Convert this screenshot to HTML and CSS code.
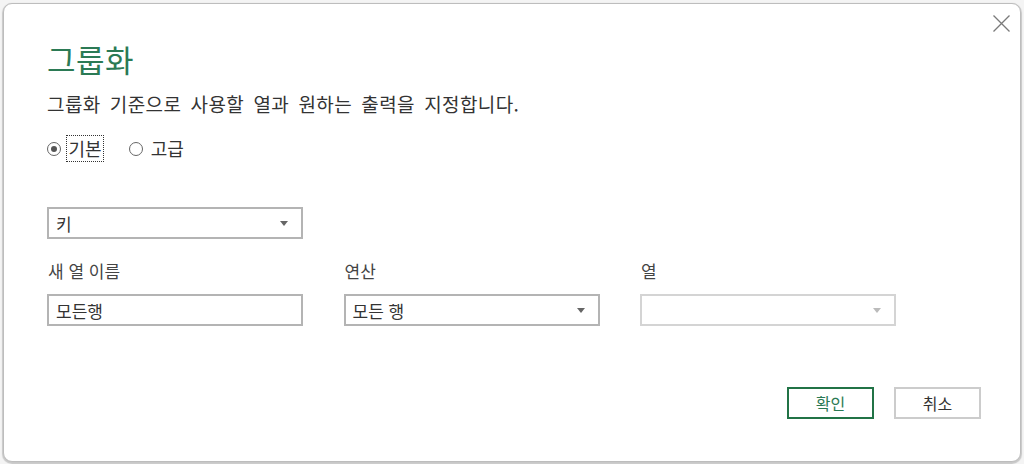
FILE: index.html
```html
<!DOCTYPE html>
<html lang="ko">
<head>
<meta charset="utf-8">
<link rel="stylesheet" href="styles.css">
</head>
<body>
<div class="dialog">
  <button class="close" aria-label="닫기">
    <svg width="17" height="17" viewBox="0 0 17 17"><path d="M0.5 0.5 L16.5 16.5 M16.5 0.5 L0.5 16.5" stroke="#7a7a7a" stroke-width="1.3" fill="none"/></svg>
  </button>
  <h1 class="title">그룹화</h1>
  <p class="subtitle">그룹화 기준으로 사용할 열과 원하는 출력을 지정합니다.</p>
  <div class="radios">
    <label class="radio"><span class="dot checked"></span><span class="rlabel focus">기본</span></label>
    <label class="radio"><span class="dot"></span><span class="rlabel">고급</span></label>
  </div>
  <div class="field select key">
    <span class="value">키</span>
    <span class="arrow"></span>
  </div>
  <div class="cols">
    <div class="col">
      <div class="label">새 열 이름</div>
      <div class="field"><span class="value">모든행</span></div>
    </div>
    <div class="col">
      <div class="label">연산</div>
      <div class="field select"><span class="value">모든 행</span><span class="arrow"></span></div>
    </div>
    <div class="col">
      <div class="label">열</div>
      <div class="field select disabled"><span class="value"></span><span class="arrow"></span></div>
    </div>
  </div>
  <div class="footer">
    <button class="btn primary">확인</button>
    <button class="btn">취소</button>
  </div>
</div>
</body>
</html>
```
FILE: styles.css
```css
html, body {
  margin: 0;
  padding: 0;
  background: #f4f4f4;
}
body {
  width: 1024px;
  height: 464px;
  overflow: hidden;
  font-family: "Noto Sans CJK KR", "Noto Sans", sans-serif;
  color: #333;
}
.dialog {
  position: relative;
  box-sizing: border-box;
  margin: 3px 0 0 3px;
  width: 1018px;
  height: 459px;
  background: #fff;
  border: 1px solid #bdbdbd;
  border-radius: 9px;
  box-shadow: 0 1px 1px 1px rgba(0,0,0,0.18);
  padding: 0 0 0 43px;
  display: flex;
  flex-direction: column;
  align-items: flex-start;
}
.close {
  position: absolute;
  top: 10px;
  right: 9px;
  width: 19px;
  height: 19px;
  padding: 0;
  border: 0;
  background: transparent;
  display: flex;
  align-items: center;
  justify-content: center;
}
.title {
  margin: 35px 0 0 0;
  font-size: 31px;
  font-weight: 400;
  line-height: 40px;
  letter-spacing: 0.5px;
  color: #2b7a55;
}
.subtitle {
  margin: 12px 0 0 0;
  font-size: 19px;
  line-height: 26px;
  letter-spacing: 0.4px;
  word-spacing: 3.5px;
  color: #333;
}
.radios {
  display: flex;
  gap: 25px;
  margin-top: 18px;
  height: 27px;
  align-items: center;
}
.radio {
  display: flex;
  align-items: center;
  font-size: 18px;
  color: #333;
}
.dot {
  box-sizing: border-box;
  width: 14px;
  height: 14px;
  border: 1px solid #666;
  border-radius: 50%;
  margin-right: 5px;
  position: relative;
}
.dot.checked::after {
  content: "";
  position: absolute;
  left: 3px;
  top: 3px;
  width: 6px;
  height: 6px;
  border-radius: 50%;
  background: #555;
}
.rlabel {
  line-height: 25px;
  padding: 0 1.5px;
  border: 1px dotted transparent;
}
.rlabel.focus {
  border-color: #333;
}
.field {
  box-sizing: border-box;
  width: 256px;
  height: 32px;
  border: 2px solid #b4b4b4;
  display: flex;
  align-items: center;
  justify-content: space-between;
  padding: 0 13px 0 7px;
  font-size: 17px;
  color: #333;
  background: #fff;
}
.field.key {
  margin-top: 45px;
}
.field.disabled {
  border-color: #d4d4d4;
}
.arrow {
  width: 0;
  height: 0;
  border-left: 4.5px solid transparent;
  border-right: 4.5px solid transparent;
  border-top: 5px solid #666;
}
.field.disabled .arrow {
  border-top-color: #bbb;
}
.cols {
  display: flex;
  gap: 40.5px;
  margin-top: 20px;
}
.col {
  display: flex;
  flex-direction: column;
}
.label {
  font-size: 17px;
  line-height: 24px;
  margin: 0 0 11px 1px;
  color: #444;
}
.footer {
  align-self: flex-end;
  display: flex;
  gap: 20px;
  margin: 61px 39px 0 0;
}
.btn {
  box-sizing: border-box;
  width: 87px;
  height: 32px;
  border: 2px solid #cccccc;
  background: #fff;
  font-family: "Noto Sans CJK KR", "Noto Sans", sans-serif;
  font-size: 16px;
  color: #333;
  padding: 0;
}
.btn.primary {
  border-color: #217346;
  color: #2b7a55;
}
```
